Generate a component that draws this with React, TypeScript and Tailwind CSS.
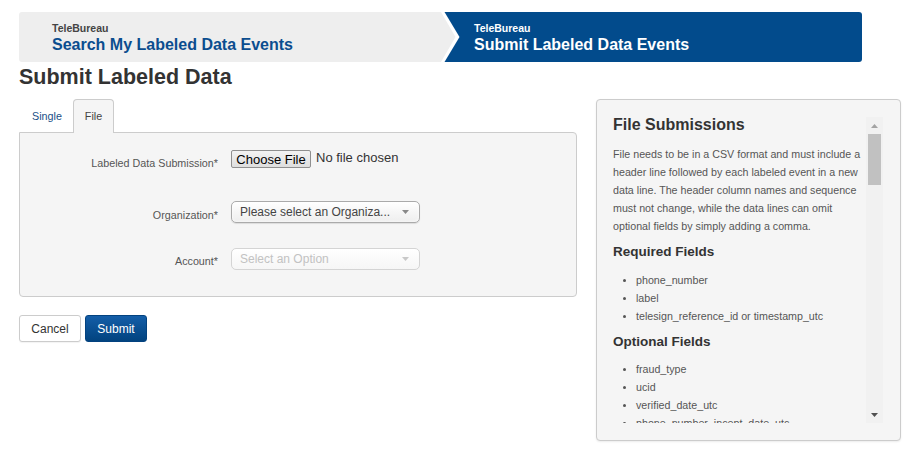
import React from "react";

const font = { fontFamily: '"Liberation Sans", Arial, sans-serif' };

function Bullet({ children }: { children: React.ReactNode }) {
  return (
    <div className="flex items-center h-[18px] whitespace-nowrap">
      <span className="ml-[10px] mr-[10px] w-[3px] h-[3px] rounded-full bg-[#555] shrink-0" />
      <span>{children}</span>
    </div>
  );
}

export default function App() {
  return (
    <div
      className="w-[912px] h-[454px] bg-white pl-[19px] pt-[12px] text-[#333] overflow-hidden"
      style={font}
    >
      {/* breadcrumb */}
      <div className="flex w-[843px] h-[50px] rounded-[3px] overflow-hidden">
        <div className="w-[422px] bg-[#eeeeee] pl-[33px] pt-[10px]">
          <div className="text-[10.5px] leading-[12px] font-bold text-[#444]">TeleBureau</div>
          <div className="mt-[2px] text-[16px] leading-[18px] font-bold text-[#0b4d8f]">
            Search My Labeled Data Events
          </div>
        </div>
        <div className="relative flex-1 bg-[#024b8c] pl-[33px] pt-[10px]">
          <svg className="absolute left-0 top-0" width="20" height="50" viewBox="0 0 20 50">
            <polygon points="0,0 3.5,0 18.5,25 3.5,50 0,50" fill="#ffffff" />
            <polygon points="0,0 14.5,25 0,50" fill="#eeeeee" />
          </svg>
          <div className="text-[10.5px] leading-[12px] font-bold text-white">TeleBureau</div>
          <div className="mt-[2px] text-[16px] leading-[18px] font-bold text-white">
            Submit Labeled Data Events
          </div>
        </div>
      </div>

      <h1 className="mt-[3px] text-[21.5px] leading-[24px] font-bold text-[#333]">
        Submit Labeled Data
      </h1>

      <div className="flex mt-[10px] gap-[19px]">
        {/* left column */}
        <div className="w-[558px]">
          <div className="flex items-end h-[33px] pl-[2px]">
            <div className="w-[52px] h-[33px] flex items-center justify-center text-[10.75px] text-[#1a4f86] pt-[1px]">
              Single
            </div>
            <div className="relative z-10 w-[41px] h-[34px] mb-[-1px] flex items-center justify-center text-[10.75px] text-[#444] bg-[#f5f5f5] border border-[#cccccc] border-b-0 rounded-t-[4px]">
              File
            </div>
          </div>
          <div className="border border-[#cccccc] rounded-b-[4px] rounded-tr-[4px] bg-[#f5f5f5] pt-[17px] pb-[26px]">
            {/* row 1 */}
            <div className="flex h-[51px]">
              <div className="w-[198px] text-right text-[10.75px] leading-[13px] pt-[7px] text-[#555]">
                Labeled Data Submission*
              </div>
              <div className="ml-[13px] flex items-start">
                <div className="w-[80px] h-[18px] flex items-center justify-center border border-[#8f8f8f] rounded-[2px] bg-gradient-to-b from-[#f3f3f3] to-[#dedede] text-[13px] leading-[15px] text-black">
                  Choose File
                </div>
                <div className="ml-[5px] text-[13px] leading-[15px] text-[#333]">No file chosen</div>
              </div>
            </div>
            {/* row 2 */}
            <div className="flex h-[47px]">
              <div className="w-[198px] text-right text-[10.75px] leading-[13px] pt-[8px] text-[#555]">
                Organization*
              </div>
              <div className="ml-[13px] w-[189px] h-[22px] flex items-center justify-between pl-[8px] pr-[10px] border border-[#aaaaaa] rounded-[5px] bg-gradient-to-b from-[#ffffff] via-[#f6f6f6] to-[#eeeeee] shadow-[0_0_3px_#fff_inset,0_1px_1px_rgba(0,0,0,0.1)] text-[12px] text-[#444]">
                <span className="whitespace-nowrap">Please select an Organiza...</span>
                <svg width="7" height="4" viewBox="0 0 7 4">
                  <polygon points="0,0 7,0 3.5,4" fill="#888" />
                </svg>
              </div>
            </div>
            {/* row 3 */}
            <div className="flex h-[22px]">
              <div className="w-[198px] text-right text-[10.75px] leading-[13px] pt-[7px] text-[#555]">
                Account*
              </div>
              <div className="ml-[13px] w-[189px] h-[22px] flex items-center justify-between pl-[8px] pr-[10px] border border-[#d4d4d4] rounded-[5px] bg-gradient-to-b from-[#ffffff] to-[#f6f6f6] text-[12px] text-[#c2c2c2]">
                <span className="whitespace-nowrap">Select an Option</span>
                <svg width="7" height="4" viewBox="0 0 7 4">
                  <polygon points="0,0 7,0 3.5,4" fill="#c8c8c8" />
                </svg>
              </div>
            </div>
          </div>

          <div className="flex gap-[4px] mt-[18px]">
            <div className="w-[62px] h-[27px] flex items-center justify-center border border-[#cccccc] rounded-[3px] bg-white text-[12px] text-[#333] shadow-[0_1px_1px_rgba(0,0,0,0.05)]">
              Cancel
            </div>
            <div className="w-[62px] h-[27px] flex items-center justify-center border border-[#03427f] rounded-[3px] bg-gradient-to-b from-[#145ea8] to-[#02437f] text-[12px] text-white">
              Submit
            </div>
          </div>
        </div>

        {/* right panel */}
        <div className="w-[305px] h-[342px] border border-[#cccccc] rounded-[4px] bg-[#f5f5f5] pt-[17px] pb-[17px] pl-[16px] pr-[17px] shadow-[0_1px_2px_rgba(0,0,0,0.08)]">
          <div className="flex h-[306px]">
            <div className="w-[253px] h-[306px] overflow-hidden">
              <div className="text-[16px] leading-[16px] font-bold text-[#333]">File Submissions</div>
              <div className="mt-[12px] text-[10.7px] leading-[18px] text-[#555] whitespace-nowrap">
                <div>File needs to be in a CSV format and must include a</div>
                <div>header line followed by each labeled event in a new</div>
                <div>data line. The header column names and sequence</div>
                <div>must not change, while the data lines can omit</div>
                <div>optional fields by simply adding a comma.</div>
              </div>
              <div className="mt-[9px] text-[13.5px] leading-[16px] font-bold text-[#333]">Required Fields</div>
              <div className="mt-[11px] text-[10.7px] leading-[18px] text-[#555]">
                <Bullet>phone_number</Bullet>
                <Bullet>label</Bullet>
                <Bullet>telesign_reference_id or timestamp_utc</Bullet>
              </div>
              <div className="mt-[9px] text-[13.5px] leading-[16px] font-bold text-[#333]">Optional Fields</div>
              <div className="mt-[10px] text-[10.7px] leading-[18px] text-[#555]">
                <Bullet>fraud_type</Bullet>
                <Bullet>ucid</Bullet>
                <Bullet>verified_date_utc</Bullet>
                <Bullet>phone_number_incept_date_utc</Bullet>
              </div>
            </div>
            <div className="w-[17px] h-[306px] bg-[#f1f1f1] flex flex-col items-center">
              <div className="h-[17px] w-full flex items-center justify-center">
                <svg width="7" height="4" viewBox="0 0 7 4">
                  <polygon points="3.5,0 7,4 0,4" fill="#a3a3a3" />
                </svg>
              </div>
              <div className="w-[13px] h-[51px] bg-[#c1c1c1]" />
              <div className="flex-1" />
              <div className="h-[17px] w-full flex items-center justify-center">
                <svg width="7" height="4" viewBox="0 0 7 4">
                  <polygon points="0,0 7,0 3.5,4" fill="#505050" />
                </svg>
              </div>
            </div>
          </div>
        </div>
      </div>
    </div>
  );
}
